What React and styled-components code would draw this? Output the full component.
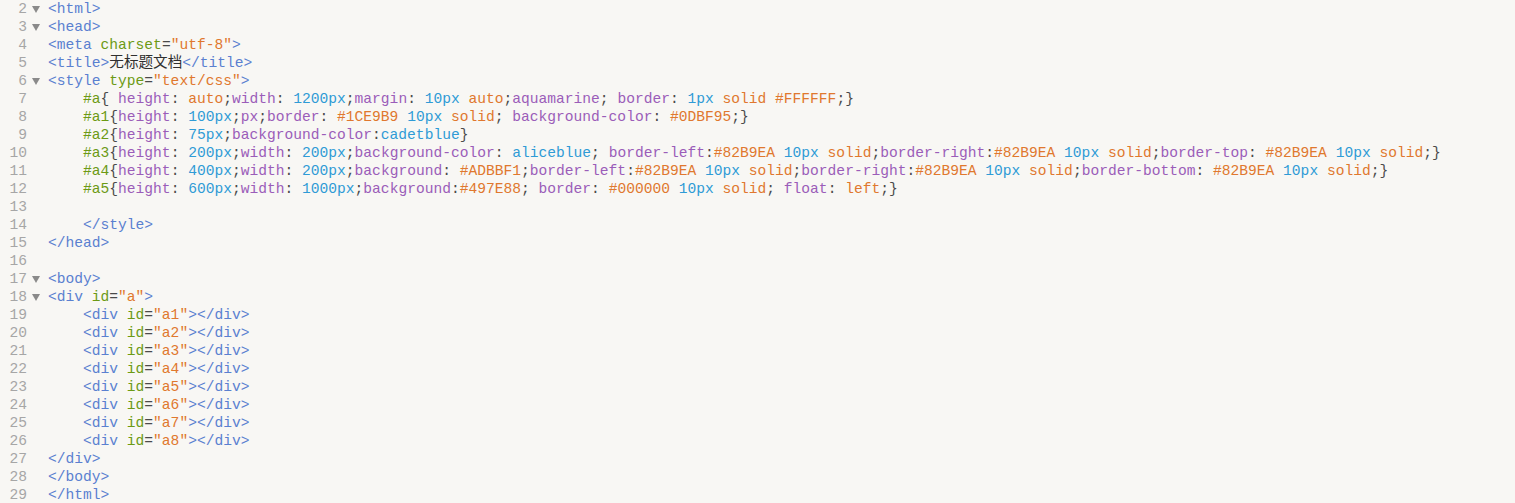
import styled, { createGlobalStyle } from 'styled-components';

const GlobalStyle = createGlobalStyle`
  html, body {
    margin: 0;
    padding: 0;
    background: #f8f7f4;
  }
`;

const COLORS = {
  tag: '#5a80d0',
  attr: '#6c9a14',
  sel: '#6c9a14',
  str: '#e0782e',
  prop: '#9b5db9',
  num: '#2f9bd6',
  p: '#4a4a4a',
  text: '#2f2f2f',
};

const Editor = styled.div`
  width: 1515px;
  height: 503px;
  overflow: hidden;
  background: #f8f7f4;
  font-family: "Liberation Mono", "Noto Sans CJK SC", monospace;
  font-size: 14.6px;
`;

const Line = styled.div`
  display: grid;
  grid-template-columns: 27px 21px 1fr;
  height: 18px;
  line-height: 18px;
  white-space: pre;
`;

const LineNumber = styled.span`
  text-align: right;
  color: #a6a6a6;
`;

const Fold = styled.span`
  display: flex;
  align-items: center;
  padding-left: 5px;
`;

const Code = styled.span`
  color: #4a4a4a;
`;

const Token = styled.span`
  color: ${({ $type }) => COLORS[$type] || COLORS.p};
`;

const FoldArrow = () => (
  <svg width="8" height="7" viewBox="0 0 8 7">
    <path d="M0 0 L8 0 L4 7 Z" fill="#8a8a8a" />
  </svg>
);

// helpers to keep the token tables short
const css = (s) =>
  s.split(/(#[0-9A-F]{6}|\d+px|;|:|\{|\}|\s+)/).filter(Boolean);

const cssLine = (sel, body) => {
  const out = [['p', '    '], ['sel', sel], ['p', '{']];
  let expectValue = false;
  css(body).forEach((t) => {
    if (t === ':') {
      expectValue = true;
      out.push(['p', t]);
    } else if (t === ';' || t === '{' || t === '}') {
      expectValue = false;
      out.push(['p', t]);
    } else if (/^\s+$/.test(t)) {
      out.push(['p', t]);
    } else if (/^\d+px$/.test(t)) {
      out.push(['num', t]);
    } else if (/^#[0-9A-F]{6}$/.test(t)) {
      out.push(['str', t]);
    } else if (!expectValue) {
      out.push(['prop', t]);
    } else if (/blue$/.test(t)) {
      out.push(['num', t]);
    } else {
      out.push(['str', t]);
    }
  });
  return out;
};

const divLine = (id) => [
  ['p', '    '],
  ['tag', '<div'],
  ['p', ' '],
  ['attr', 'id'],
  ['p', '='],
  ['str', `"${id}"`],
  ['tag', '></div>'],
];

const LINES = [
  { n: 2, fold: true, t: [['tag', '<html>']] },
  { n: 3, fold: true, t: [['tag', '<head>']] },
  { n: 4, t: [['tag', '<meta'], ['p', ' '], ['attr', 'charset'], ['p', '='], ['str', '"utf-8"'], ['tag', '>']] },
  { n: 5, t: [['tag', '<title>'], ['text', '无标题文档'], ['tag', '</title>']] },
  { n: 6, fold: true, t: [['tag', '<style'], ['p', ' '], ['attr', 'type'], ['p', '='], ['str', '"text/css"'], ['tag', '>']] },
  { n: 7, t: cssLine('#a', ' height: auto;width: 1200px;margin: 10px auto;aquamarine; border: 1px solid #FFFFFF;}') },
  { n: 8, t: cssLine('#a1', 'height: 100px;px;border: #1CE9B9 10px solid; background-color: #0DBF95;}') },
  { n: 9, t: cssLine('#a2', 'height: 75px;background-color:cadetblue}') },
  { n: 10, t: cssLine('#a3', 'height: 200px;width: 200px;background-color: aliceblue; border-left:#82B9EA 10px solid;border-right:#82B9EA 10px solid;border-top: #82B9EA 10px solid;}') },
  { n: 11, t: cssLine('#a4', 'height: 400px;width: 200px;background: #ADBBF1;border-left:#82B9EA 10px solid;border-right:#82B9EA 10px solid;border-bottom: #82B9EA 10px solid;}') },
  { n: 12, t: cssLine('#a5', 'height: 600px;width: 1000px;background:#497E88; border: #000000 10px solid; float: left;}') },
  { n: 13, t: [] },
  { n: 14, t: [['p', '    '], ['tag', '</style>']] },
  { n: 15, t: [['tag', '</head>']] },
  { n: 16, t: [] },
  { n: 17, fold: true, t: [['tag', '<body>']] },
  { n: 18, fold: true, t: [['tag', '<div'], ['p', ' '], ['attr', 'id'], ['p', '='], ['str', '"a"'], ['tag', '>']] },
  { n: 19, t: divLine('a1') },
  { n: 20, t: divLine('a2') },
  { n: 21, t: divLine('a3') },
  { n: 22, t: divLine('a4') },
  { n: 23, t: divLine('a5') },
  { n: 24, t: divLine('a6') },
  { n: 25, t: divLine('a7') },
  { n: 26, t: divLine('a8') },
  { n: 27, t: [['tag', '</div>']] },
  { n: 28, t: [['tag', '</body>']] },
  { n: 29, t: [['tag', '</html>']] },
];

export default function App() {
  return (
    <Editor>
      <GlobalStyle />
      {LINES.map((line) => (
        <Line key={line.n}>
          <LineNumber>{line.n}</LineNumber>
          <Fold>{line.fold && <FoldArrow />}</Fold>
          <Code>
            {line.t.map(([type, text], i) => (
              <Token key={i} $type={type}>{text}</Token>
            ))}
          </Code>
        </Line>
      ))}
    </Editor>
  );
}
